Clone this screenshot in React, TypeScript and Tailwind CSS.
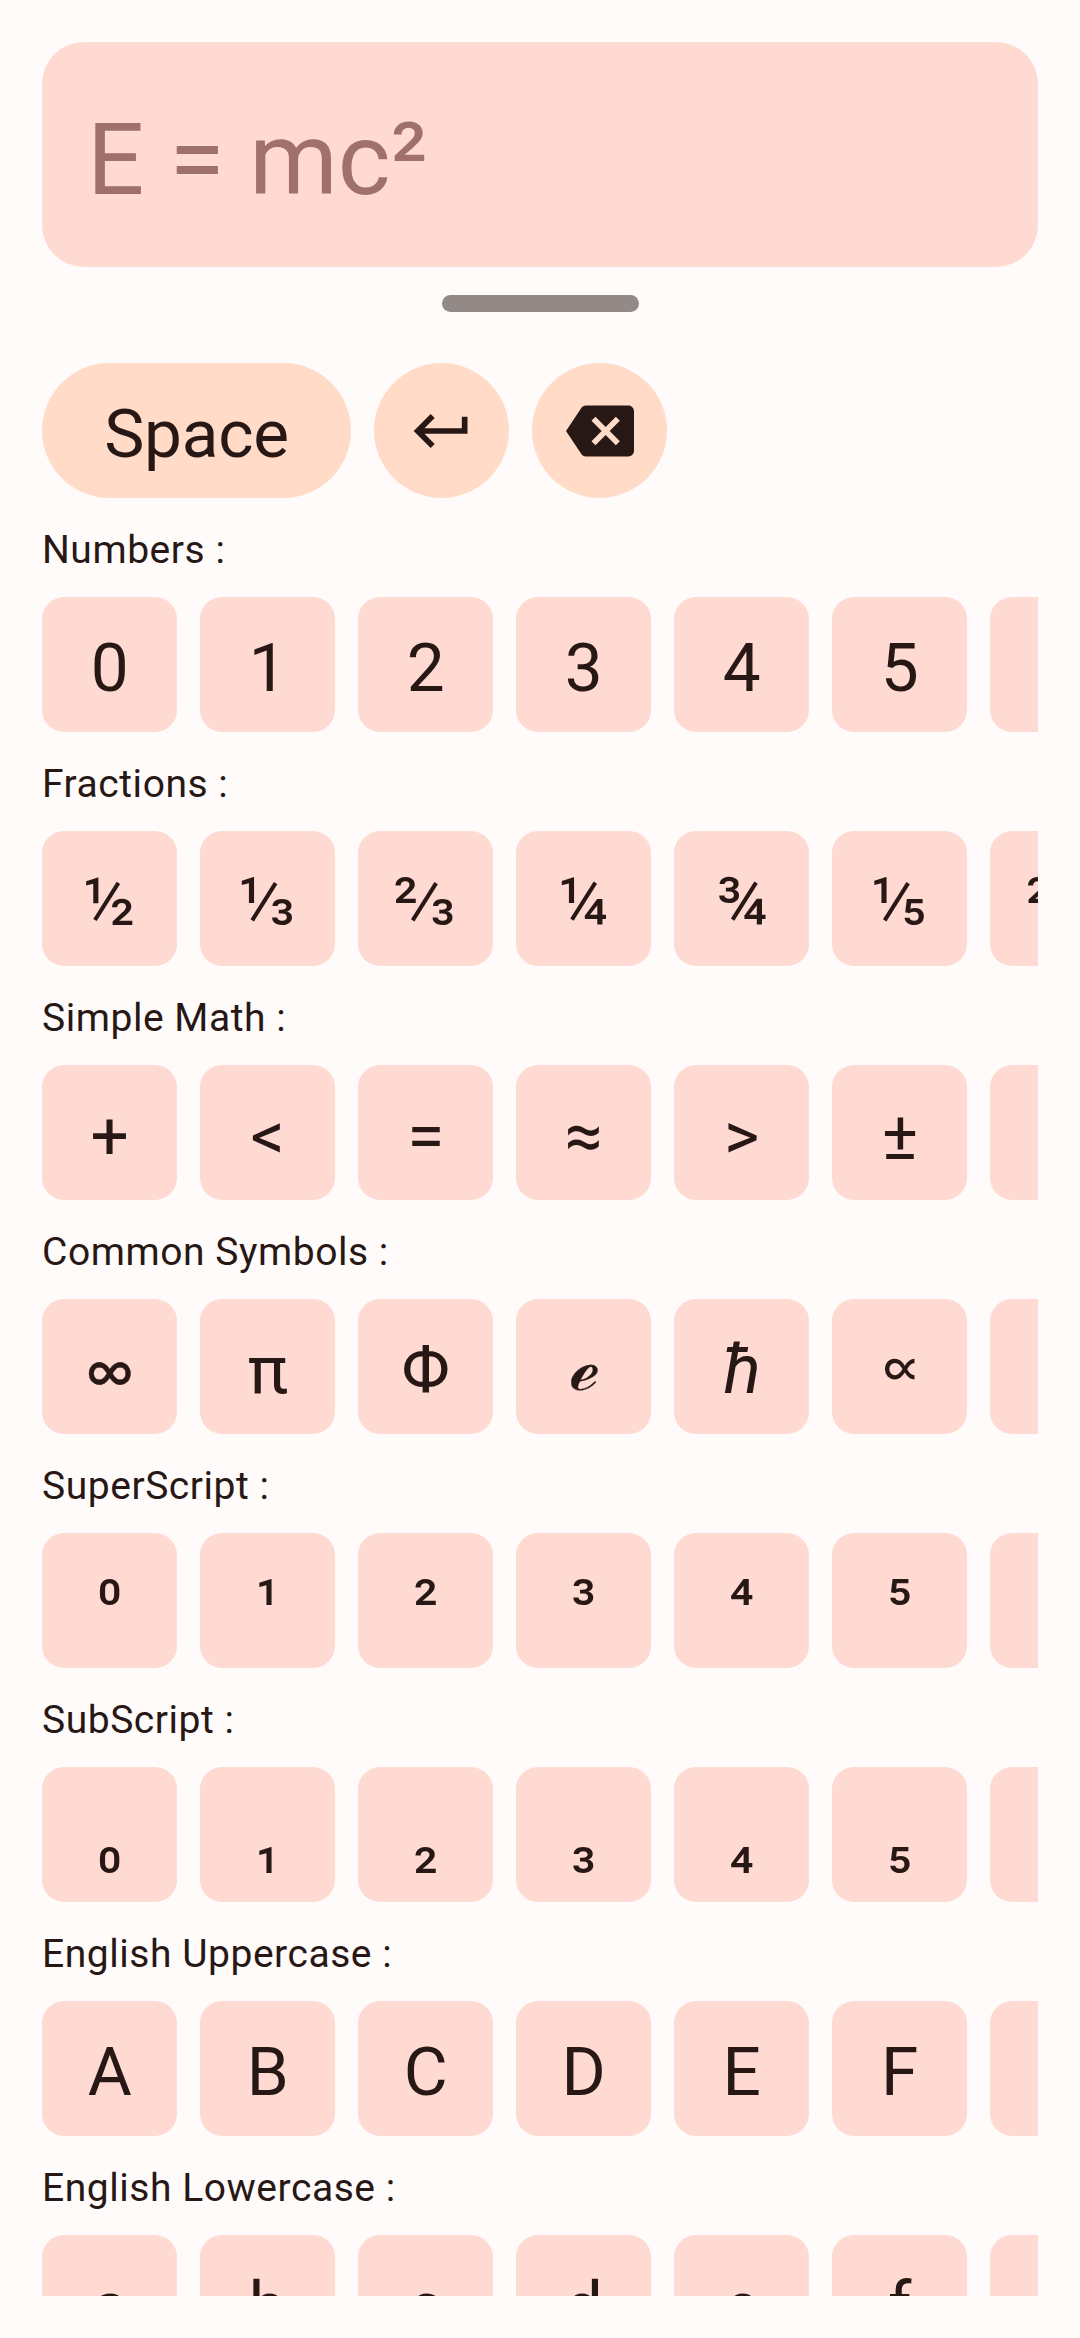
import type { ReactNode } from "react";

type Row = { label: string; keys: ReactNode[] };

function Fraction({ top, bottom, left, right }: { top: string; bottom: string; left: string; right: string }) {
  return (
    <span className="mr-[3px] flex">
      <span>{top}</span>
      <span className={left}>⁄</span>
      <span className={`translate-y-[22px] ${right}`}>{bottom}</span>
    </span>
  );
}

const rows: Row[] = [
  { label: "Numbers :", keys: ["0", "1", "2", "3", "4", "5", ""] },
  {
    label: "Fractions :",
    keys: [
      "½",
      <Fraction top="¹" bottom="³" left="-ml-[14px]" right="-ml-[9px]" />,
      <Fraction top="²" bottom="³" left="-ml-[9px]" right="-ml-[9px]" />,
      "¼",
      "¾",
      <Fraction top="¹" bottom="⁵" left="-ml-[14px]" right="-ml-[10px]" />,
      <Fraction top="²" bottom="⁵" left="-ml-[9px]" right="-ml-[10px]" />,
    ],
  },
  { label: "Simple Math :", keys: ["+", "<", "=", "≈", ">", "±", ""] },
  {
    label: "Common Symbols :",
    keys: [
      <span className="block -translate-y-[2px] font-['Lato'] text-[66px] [-webkit-text-stroke:0.5px_currentColor]">∞</span>,
      "π",
      "Φ",
      <span className="block -translate-y-[6px] font-['Noto_Sans_Math','Noto_Sans',serif] text-[82px] [-webkit-text-stroke:0.3px_currentColor]">ℯ</span>,
      <span className="text-[69px] italic">ħ</span>,
      <span className="block -translate-y-[3px] font-['Noto_Sans_Math','Noto_Sans',sans-serif]">∝</span>,
      "",
    ],
  },
  { label: "SuperScript :", keys: ["⁰", "¹", "²", "³", "⁴", "⁵", ""] },
  { label: "SubScript :", keys: ["₀", "₁", "₂", "₃", "₄", "₅", ""] },
  { label: "English Uppercase :", keys: ["A", "B", "C", "D", "E", "F", ""] },
  { label: "English Lowercase :", keys: ["a", "b", "c", "d", "e", "f", ""] },
];

export default function App() {
  return (
    <div className="h-[2338px] w-[1080px] overflow-hidden bg-[#fffbfa] px-[42px] pt-[42px] font-['Roboto','Noto_Sans',sans-serif] text-[#281815]">
      <div className="flex h-[225px] items-center rounded-[42px] bg-[#ffdad2] pt-[10px] pl-[45px] text-[101px] tracking-[-0.15px] text-[#a0706a]">
        <span className="leading-none">E = mc²</span>
      </div>
      <div className="mx-auto mt-[28px] h-[17px] w-[197px] rounded-full bg-[#938a88]" />
      <div className="mt-[51px] h-[1933px] overflow-hidden">
        <div className="flex gap-[23px]">
          <button className="flex h-[135px] w-[309px] items-center justify-center rounded-full bg-[#ffdbc8] pt-[6px] text-[67.5px] leading-none tracking-[-0.3px]">
            <span>Space</span>
          </button>
          <button className="flex size-[135px] items-center justify-center rounded-full bg-[#ffdbc8]">
            <svg viewBox="0 0 24 24" className="size-[68px]" fill="currentColor"><path d="M19 7v4H5.83l3.58-3.59L8 6l-6 6 6 6 1.41-1.41L5.83 13H21V7z" /></svg>
          </button>
          <button className="flex size-[135px] items-center justify-center rounded-full bg-[#ffdbc8]">
            <svg viewBox="0 0 24 24" className="size-[68px]" fill="currentColor"><path d="M22 3H7c-.69 0-1.23.35-1.59.88L0 12l5.41 8.11c.36.53.9.89 1.59.89h15c1.1 0 2-.9 2-2V5c0-1.1-.9-2-2-2zm-3 12.59L17.59 17 14 13.41 10.41 17 9 15.59 12.59 12 9 8.41 10.41 7 14 10.59 17.59 7 19 8.41 15.41 12 19 15.59z" /></svg>
          </button>
        </div>
        {rows.map((row) => (
          <section key={row.label} className="h-[234px] pt-[28px]">
            <h2 className="h-[71px] text-[39px] leading-[48px] tracking-[0.54px]">{row.label}</h2>
            <div className="flex gap-[23px] overflow-hidden">
              {row.keys.map((k, i) => (
                <button key={i} className="flex size-[135px] shrink-0 items-center justify-center rounded-[22px] bg-[#ffdad2] pt-[6px] pl-[0.5px] text-[67.5px] leading-none">
                  <span>{k}</span>
                </button>
              ))}
            </div>
          </section>
        ))}
      </div>
    </div>
  );
}
